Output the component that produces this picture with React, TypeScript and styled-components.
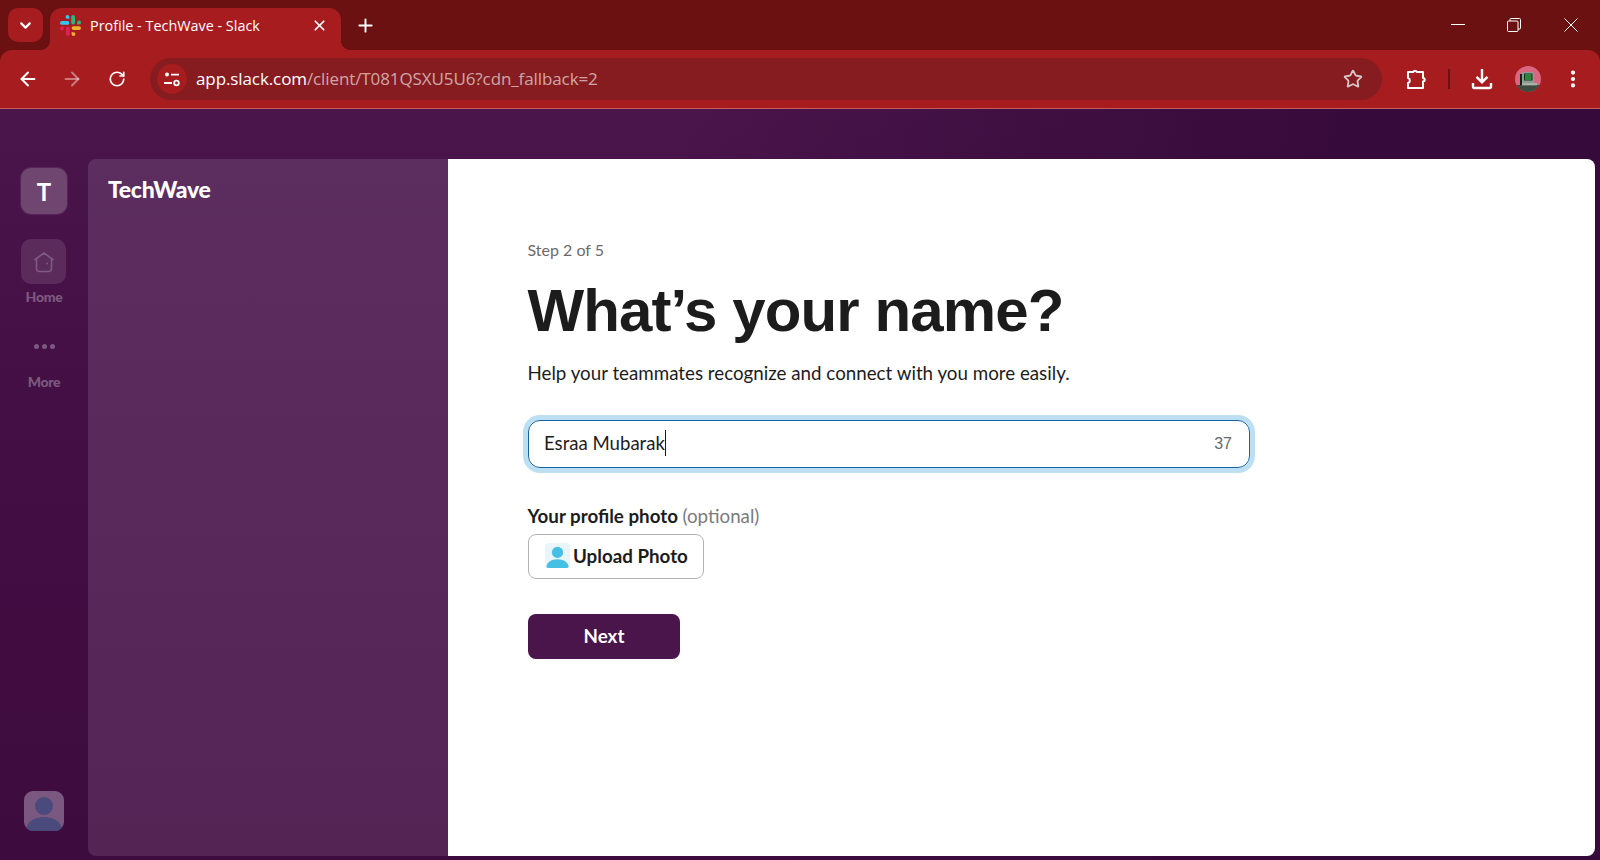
import React from 'react';
import styled, { createGlobalStyle } from 'styled-components';
import { ArrowLeft, ArrowRight, RotateCw, Star, Plus, X, ChevronDown, EllipsisVertical } from 'lucide-react';

const chromeDark = '#6c1112';
const chromeRed = '#a61c1f';
const aubergine = '#4a154b';

const GlobalStyles = createGlobalStyle`
  html, body {
    margin: 0;
    padding: 0;
    height: 100%;
    overflow: hidden;
  }
  body {
    font-family: 'Lato', 'Open Sans', sans-serif;
  }
  * {
    box-sizing: border-box;
  }
`;

const Frame = styled('div')`
  width: 1600px;
  height: 860px;
  display: flex;
  flex-direction: column;
  background-color: ${chromeDark};
`;

const TabStrip = styled('div')`
  height: 50px;
  flex-shrink: 0;
  display: flex;
  align-items: flex-end;
  padding: 0 1px 0 8px;
`;

const TabSearch = styled('div')`
  width: 35px;
  height: 34px;
  margin-bottom: 8px;
  border-radius: 10px;
  background-color: ${chromeRed};
  color: #fff;
  display: flex;
  align-items: center;
  justify-content: center;
`;

const Tab = styled('div')`
  position: relative;
  margin-left: 7px;
  width: 291px;
  height: 42px;
  background-color: ${chromeRed};
  border-radius: 12px 12px 0 0;
  display: flex;
  align-items: center;
  padding: 0 13px 8px 10px;
  color: #fff;

  &::before,
  &::after {
    content: '';
    position: absolute;
    bottom: 0;
    width: 10px;
    height: 10px;
  }
  &::before {
    left: -10px;
    background: radial-gradient(circle at 0 0, ${chromeDark} 10px, ${chromeRed} 10.5px);
  }
  &::after {
    right: -10px;
    background: radial-gradient(circle at 100% 0, ${chromeDark} 10px, ${chromeRed} 10.5px);
  }
`;

const TabTitle = styled('span')`
  flex: 1;
  margin-left: 9px;
  font-family: 'Open Sans', sans-serif;
  font-size: 14.4px;
  white-space: nowrap;
`;

const NewTab = styled('div')`
  margin: 0 0 8px 7px;
  width: 34px;
  height: 34px;
  color: #fff;
  display: flex;
  align-items: center;
  justify-content: center;
`;

const Spacer = styled('div')`
  flex: 1;
`;

const WindowButton = styled('div')`
  width: 56.5px;
  height: 50px;
  color: #fff;
  display: flex;
  align-items: center;
  justify-content: center;
`;

const Toolbar = styled('div')`
  height: 59px;
  flex-shrink: 0;
  background-color: ${chromeRed};
  border-bottom: 1px solid #c65a5c;
  border-radius: 12px 12px 0 0;
  display: flex;
  align-items: center;
  padding: 0 0 1px 6px;
`;

const NavButton = styled('div')<{ $dim?: boolean }>`
  width: 44px;
  height: 40px;
  color: ${(p) => (p.$dim ? 'rgba(255,255,255,0.42)' : '#fff')};
  display: flex;
  align-items: center;
  justify-content: center;
`;

const ReloadButton = styled(NavButton)`
  padding-left: 2px;
`;

const Omnibox = styled('div')`
  width: 1232px;
  height: 42px;
  margin-left: 12px;
  border-radius: 21px;
  background-color: #861c20;
  display: flex;
  align-items: center;
  padding: 0 19px 0 7px;
`;

const SiteInfo = styled('div')`
  width: 30px;
  height: 30px;
  border-radius: 50%;
  background-color: ${chromeRed};
  display: flex;
  align-items: center;
  justify-content: center;
`;

const Url = styled('div')`
  margin-left: 9px;
  flex: 1;
  font-family: 'Open Sans', sans-serif;
  font-size: 17px;
  letter-spacing: -0.1px;
  color: rgba(255, 255, 255, 0.62);
  white-space: nowrap;
`;

const UrlHost = styled('span')`
  color: #fff;
`;

const ToolbarIcons = styled('div')`
  display: flex;
  align-items: center;
  margin-left: 13px;
`;

const ToolbarButton = styled('div')<{ $shift?: number }>`
  width: 44px;
  height: 40px;
  margin-left: ${(p) => p.$shift ?? 0}px;
  color: #fff;
  display: flex;
  align-items: center;
  justify-content: center;
`;

const ToolbarDivider = styled('div')`
  width: 2px;
  height: 20px;
  margin: 0 10px 0 9px;
  background-color: #6c1112;
`;

const Workspace = styled('div')`
  flex: 1;
  min-height: 0;
  display: flex;
  padding: 50px 5px 4px 0;
  background:
    linear-gradient(90deg, rgba(54, 10, 58, 0) 42%, #360a3a 85%),
    linear-gradient(180deg, #4a154b 0%, #420e43 45%, #3e0b3f 100%);
`;

const Rail = styled('nav')`
  width: 88px;
  flex-shrink: 0;
  display: flex;
  flex-direction: column;
  align-items: center;
  padding: 9px 0 25px;
`;

const TeamTile = styled('div')`
  width: 46px;
  height: 46px;
  border-radius: 10px;
  background-color: #6f4670;
  box-shadow: 0 0 0 1px rgba(255, 255, 255, 0.08);
  color: #fff;
  font-size: 24px;
  font-weight: 700;
  display: flex;
  align-items: center;
  justify-content: center;
`;

const RailTile = styled('div')`
  width: 45px;
  height: 45px;
  margin: 25px 1px 4px 0;
  border-radius: 10px;
  background-color: #5b2b5c;
  display: flex;
  align-items: center;
  justify-content: center;
`;

const RailLabel = styled('div')`
  color: #7d5a7f;
  font-size: 14px;
  font-weight: 900;
  line-height: 18px;
  letter-spacing: -0.3px;
`;

const RailDots = styled('div')`
  margin-top: 31px;
  margin-bottom: 18px;
  height: 18px;
  display: flex;
  align-items: center;
  gap: 3px;
`;

const RailDot = styled('span')`
  width: 5px;
  height: 5px;
  border-radius: 50%;
  background-color: #7d5a7f;
`;

const RailAvatar = styled('div')`
  margin-top: auto;
  width: 40px;
  height: 40px;
  border-radius: 9px;
  overflow: hidden;
  background-color: #7a5880;
`;

const Card = styled('main')`
  flex: 1;
  min-width: 0;
  display: flex;
  border-radius: 8px;
  overflow: hidden;
`;

const SidePanel = styled('aside')`
  width: 360px;
  flex-shrink: 0;
  padding: 16px 20px;
  background: linear-gradient(180deg, #5c2d5f 0%, #542455 100%);
`;

const TeamName = styled('div')`
  color: #fff;
  font-size: 23px;
  font-weight: 900;
  letter-spacing: -0.3px;
  line-height: 28px;
`;

const Content = styled('section')`
  flex: 1;
  background-color: #fff;
  padding: 81px 0 0 79.5px;
  display: flex;
  flex-direction: column;
  align-items: flex-start;
`;

const Step = styled('div')`
  color: #6c6a6c;
  font-size: 16px;
  line-height: 20px;
`;

const Heading = styled('h1')`
  margin: 15px 0 0;
  font-family: 'Liberation Sans', Arial, sans-serif;
  font-size: 60px;
  font-weight: 700;
  line-height: 72px;
  letter-spacing: -0.9px;
  color: #1d1c1d;
`;

const Lead = styled('p')`
  margin: 12px 0 0;
  color: #1d1c1d;
  font-size: 18.75px;
  line-height: 28px;
`;

const NameField = styled('div')`
  margin: 33px 0 0 0.5px;
  width: 722px;
  height: 48px;
  border: 1px solid #1264a3;
  border-radius: 12px;
  box-shadow: 0 0 0 5px #bce0f2;
  display: flex;
  align-items: center;
  padding: 0 17px 0 15px;
  color: #1d1c1d;
  font-size: 18.6px;
`;

const NameValue = styled('span')`
  border-right: 1px solid #1d1c1d;
  line-height: 26px;
  margin-bottom: 3px;
`;

const Counter = styled('span')`
  margin-left: auto;
  font-family: 'Liberation Sans', Arial, sans-serif;
  font-size: 16px;
  color: #696969;
`;

const PhotoLabel = styled('div')`
  margin-top: 35px;
  color: #1d1c1d;
  font-size: 18.75px;
  font-weight: 700;
  line-height: 26px;
`;

const Optional = styled('span')`
  font-weight: 400;
  color: #7c7a7c;
`;

const UploadButton = styled('button')`
  margin: 5px 0 0 0.5px;
  height: 45px;
  padding: 0 15px 2px 16px;
  border: 1px solid #b4b2b4;
  border-radius: 8px;
  background-color: #fff;
  color: #1d1c1d;
  font-family: inherit;
  font-size: 18.75px;
  font-weight: 700;
  display: flex;
  align-items: center;
  gap: 3px;
`;

const PhotoIcon = styled('span')`
  width: 25px;
  height: 25px;
  border-radius: 4px;
  background-color: #e8f5fa;
  display: flex;
  overflow: hidden;
`;

const NextButton = styled('button')`
  margin: 35px 0 0 0.5px;
  width: 152px;
  height: 45px;
  padding: 0 0 2px;
  border: none;
  border-radius: 8px;
  background-color: ${aubergine};
  color: #fff;
  font-family: inherit;
  font-size: 18.75px;
  font-weight: 700;
`;

function SlackLogo() {
  return (
    <svg width="21" height="21" viewBox="0 0 21 21">
      <g fill="#36c5f0">
        <rect x="0" y="6" width="9.4" height="3.8" rx="1.9" />
        <path d="M7.5 0a1.9 1.9 0 0 1 1.9 1.9v1.9H7.5a1.9 1.9 0 0 1 0-3.8z" />
      </g>
      <g fill="#2eb67d">
        <rect x="11.2" y="0" width="3.8" height="9.4" rx="1.9" />
        <path d="M21 7.5a1.9 1.9 0 0 1-1.9 1.9h-1.9V7.5a1.9 1.9 0 0 1 3.8 0z" />
      </g>
      <g fill="#ecb22e">
        <rect x="11.6" y="11.2" width="9.4" height="3.8" rx="1.9" />
        <path d="M13.5 21a1.9 1.9 0 0 1-1.9-1.9v-1.9h1.9a1.9 1.9 0 0 1 0 3.8z" />
      </g>
      <g fill="#e01e5a">
        <rect x="6" y="11.6" width="3.8" height="9.4" rx="1.9" />
        <path d="M0 13.5a1.9 1.9 0 0 1 1.9-1.9h1.9v1.9a1.9 1.9 0 0 1-3.8 0z" />
      </g>
    </svg>
  );
}

function SiteSettingsIcon() {
  return (
    <svg width="18" height="16" viewBox="0 0 18 16" fill="none" stroke="#fff" strokeWidth="1.8">
      <circle cx="4" cy="3.6" r="2" fill="#fff" stroke="none" />
      <path d="M8 3.6h8M1 12h8" />
      <circle cx="13.5" cy="12" r="2.3" />
    </svg>
  );
}

function PuzzleIcon() {
  return (
    <svg width="22" height="22" viewBox="0 0 22 22" fill="none" stroke="#fff" strokeWidth="2" strokeLinejoin="round">
      <path d="M2 4h5.2a2 2 0 0 1 3.6 0H17v6a1.6 1.6 0 0 1 0 3.4V20H2v-5a2.6 2.6 0 0 0 0-5V4z" />
    </svg>
  );
}

function DownloadIcon() {
  return (
    <svg width="22" height="22" viewBox="0 0 22 22" fill="none" stroke="#fff" strokeWidth="2.4">
      <path d="M11 1v13M5.5 8.8 11 14.2l5.5-5.4" />
      <path d="M2 15v3.6a1.4 1.4 0 0 0 1.4 1.4h15.2a1.4 1.4 0 0 0 1.4-1.4V15" />
    </svg>
  );
}

function ProfileBadge() {
  return (
    <svg width="26" height="26" viewBox="0 0 26 26">
      <clipPath id="badge">
        <circle cx="13" cy="13" r="13" />
      </clipPath>
      <g clipPath="url(#badge)">
        <rect width="26" height="26" fill="#d9677f" />
        <rect y="19" width="26" height="7" fill="#3f4a3e" />
        <rect x="5" y="8" width="3" height="11" fill="#15201a" />
        <rect x="7" y="6" width="12" height="11" fill="#8f9a94" />
        <rect x="9" y="7.5" width="8.5" height="7" fill="#12351c" />
        <path d="M10 9h6.5M10 11h6.5M10 13h6.5" stroke="#3fd65a" strokeWidth="1" />
        <rect x="7" y="17" width="15" height="2.4" fill="#a8b0aa" />
      </g>
    </svg>
  );
}

function HomeIcon() {
  return (
    <svg width="22" height="22" viewBox="0 0 22 22" fill="none" stroke="#7d5a7f" strokeWidth="1.6" strokeLinejoin="round">
      <path d="M1.5 9 11 2l9.5 7" />
      <path d="M3.5 8v9.5a3 3 0 0 0 3 3h9a3 3 0 0 0 3-3V8" />
      <circle cx="14" cy="12.5" r="1" fill="#7d5a7f" stroke="none" />
    </svg>
  );
}

function PersonIcon({ color, size }: { color: string; size: number }) {
  return (
    <svg width={size} height={size} viewBox="0 0 40 40" fill={color}>
      <circle cx="20" cy="15" r="9" />
      <path d="M2 40c0-9 8-14 18-14s18 5 18 14z" />
    </svg>
  );
}

export default function App() {
  return (
    <>
      <GlobalStyles />
      <Frame>
        <TabStrip>
          <TabSearch>
            <ChevronDown size={17} strokeWidth={3} />
          </TabSearch>
          <Tab>
            <SlackLogo />
            <TabTitle>Profile - TechWave - Slack</TabTitle>
            <X size={17} strokeWidth={2.4} />
          </Tab>
          <NewTab>
            <Plus size={21} strokeWidth={2.2} />
          </NewTab>
          <Spacer />
          <WindowButton>
            <svg width="14" height="2" viewBox="0 0 14 2">
              <rect width="14" height="1" fill="#fff" />
            </svg>
          </WindowButton>
          <WindowButton>
            <svg width="14" height="14" viewBox="0 0 14 14" fill="none" stroke="#fff">
              <rect x="0.5" y="3" width="10.5" height="10.5" rx="1" />
              <path d="M3 3V1.5a1 1 0 0 1 1-1h8.5a1 1 0 0 1 1 1V10a1 1 0 0 1-1 1H11" />
            </svg>
          </WindowButton>
          <WindowButton>
            <svg width="14" height="14" viewBox="0 0 14 14" stroke="#fff" strokeWidth="1">
              <path d="M0.5 0.5 13.5 13.5M13.5 0.5 0.5 13.5" />
            </svg>
          </WindowButton>
        </TabStrip>
        <Toolbar>
          <NavButton>
            <ArrowLeft size={22} strokeWidth={2.2} />
          </NavButton>
          <NavButton $dim>
            <ArrowRight size={22} strokeWidth={2.2} />
          </NavButton>
          <ReloadButton>
            <RotateCw size={18} strokeWidth={2.2} />
          </ReloadButton>
          <Omnibox>
            <SiteInfo>
              <SiteSettingsIcon />
            </SiteInfo>
            <Url>
              <UrlHost>app.slack.com</UrlHost>/client/T081QSXU5U6?cdn_fallback=2
            </Url>
            <Star size={20} strokeWidth={2.2} color="#d8c4c4" />
          </Omnibox>
          <ToolbarIcons>
            <ToolbarButton>
              <PuzzleIcon />
            </ToolbarButton>
            <ToolbarDivider />
            <ToolbarButton>
              <DownloadIcon />
            </ToolbarButton>
            <ToolbarButton $shift={2}>
              <ProfileBadge />
            </ToolbarButton>
            <ToolbarButton $shift={1}>
              <EllipsisVertical size={22} strokeWidth={2.6} />
            </ToolbarButton>
          </ToolbarIcons>
        </Toolbar>
        <Workspace>
          <Rail>
            <TeamTile>T</TeamTile>
            <RailTile>
              <HomeIcon />
            </RailTile>
            <RailLabel>Home</RailLabel>
            <RailDots>
              <RailDot />
              <RailDot />
              <RailDot />
            </RailDots>
            <RailLabel>More</RailLabel>
            <RailAvatar>
              <PersonIcon color="#4a4a7c" size={40} />
            </RailAvatar>
          </Rail>
          <Card>
            <SidePanel>
              <TeamName>TechWave</TeamName>
            </SidePanel>
            <Content>
              <Step>Step 2 of 5</Step>
              <Heading>What’s your name?</Heading>
              <Lead>Help your teammates recognize and connect with you more easily.</Lead>
              <NameField>
                <NameValue>Esraa Mubarak</NameValue>
                <Counter>37</Counter>
              </NameField>
              <PhotoLabel>
                Your profile photo <Optional>(optional)</Optional>
              </PhotoLabel>
              <UploadButton>
                <PhotoIcon>
                  <PersonIcon color="#45bfe3" size={25} />
                </PhotoIcon>
                Upload Photo
              </UploadButton>
              <NextButton>Next</NextButton>
            </Content>
          </Card>
        </Workspace>
      </Frame>
    </>
  );
}
